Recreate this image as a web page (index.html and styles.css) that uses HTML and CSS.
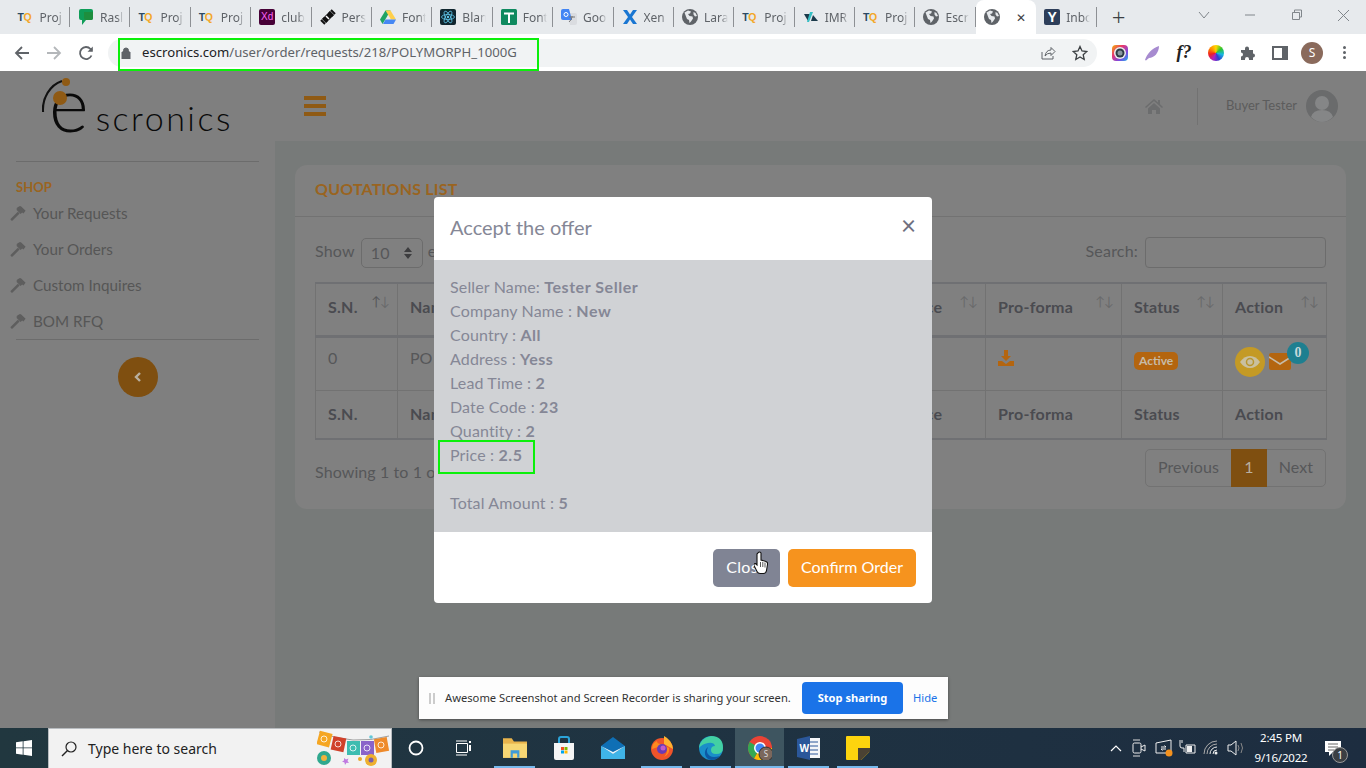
FILE: index.html
```html
<!DOCTYPE html>
<html lang="en">
<head>
    <meta charset="UTF-8">
    <title>Escronics - Quotations</title>
    <link rel="stylesheet" href="styles.css">
</head>
<body>

    <svg class="defs" width="0" height="0">
        <symbol id="globe" viewBox="0 0 16 16">
            <circle cx="8" cy="8" r="8" fill="#5f6368"/>
            <path d="M2.500 3.500 6 1.500l3 1-1 2-2 .5 1.500 2 3 .5.5 2-2 3-1.500 1.500-.5-3-2-1-1-2.500zM11.500 3l2 1 1.500 3-2 .5-1.500-2z" fill="#e7eaed"/>
        </symbol>
        <symbol id="hammer" viewBox="0 0 16 16">
            <path d="M.8 13.800 7.800 6.800l1.800 1.800-7 7q-.6.500-1.200 0l-.6-.6q-.5-.6 0-1.200zM6.200 3.200 9.400 1.200q1-.3 1.800.3L15.600 5.700l-2.200 2.700-1.200-.8-1.600 1.300-4.200-4.200.9-1z" fill="#5e5e5e"/>
        </symbol>
    </svg>

    <!-- Browser tabs -->
    <div class="tabstrip">
        <div class="tab"><span class="fav-tq">T<b>Q</b></span><span class="tab-title">Proj</span></div>
        <div class="tab"><svg class="fav" viewBox="0 0 16 16"><path d="M3 0h10q2 0 2 2v7q0 2-2 2H8l-4 5v-5H3q-2 0-2-2V2q0-2 2-2z" fill="#0f9d58"/><path d="M6 3h9v6q0 2-2 2H8q-2 0-2-2z" fill="#1e8e3e"/></svg><span class="tab-title">Rasl</span></div>
        <div class="tab"><span class="fav-tq">T<b>Q</b></span><span class="tab-title">Proj</span></div>
        <div class="tab"><span class="fav-tq">T<b>Q</b></span><span class="tab-title">Proj</span></div>
        <div class="tab"><span class="fav-xd">Xd</span><span class="tab-title">club</span></div>
        <div class="tab"><svg class="fav" viewBox="0 0 16 16"><path d="M2 10 10 2l4 4-8 8z" fill="#111"/><path d="M1 11l4 4M3 9l4 4M9 3l4 4M11 1l4 4" stroke="#111" stroke-width="2"/><path d="M6 7l3 3" stroke="#fff" stroke-width="1.500"/></svg><span class="tab-title">Pers</span></div>
        <div class="tab"><svg class="fav" viewBox="0 0 16 16"><path d="M5.500 1.500h5L5 11 2.500 15 0 10.500z" fill="#1fa463"/><path d="M5.500 1.500h5l5.500 9h-5z" fill="#ffd04b"/><path d="M3 15l2.500-4.500H16L13.500 15z" fill="#4688f4"/></svg><span class="tab-title">Font</span></div>
        <div class="tab"><svg class="fav" viewBox="0 0 16 16"><rect width="16" height="16" rx="2" fill="#10262f"/><g fill="none" stroke="#5fc6e8" stroke-width=".8"><ellipse cx="8" cy="8" rx="6.500" ry="2.500"/><ellipse cx="8" cy="8" rx="6.500" ry="2.500" transform="rotate(60 8 8)"/><ellipse cx="8" cy="8" rx="6.500" ry="2.500" transform="rotate(120 8 8)"/></g><circle cx="8" cy="8" r="1.200" fill="#5fc6e8"/></svg><span class="tab-title">Blan</span></div>
        <div class="tab"><svg class="fav" viewBox="0 0 16 16"><rect width="16" height="16" rx="1.500" fill="#0f8a5f"/><path d="M3 4.500h10M8 4.500V14" stroke="#fff" stroke-width="2"/></svg><span class="tab-title">Font</span></div>
        <div class="tab"><svg class="fav" viewBox="0 0 16 16"><path d="M7 4h7q2 0 2 2v8q0 2-2 2H9z" fill="#dadce0"/><path d="M2 0h6l3 11H2q-2 0-2-2V2q0-2 2-2z" fill="#4285f4"/><path d="M8 8h6M11 7v1q-.5 3-3 5" stroke="#777" fill="none"/><circle cx="5" cy="5.500" r="2" fill="none" stroke="#fff"/></svg><span class="tab-title">Goo</span></div>
        <div class="tab"><svg class="fav" viewBox="0 0 16 16"><path d="M1 1h4l3 4.500L11 1h4l-5 7 5 7h-4L8 10.500 5 15H1l5-7z" fill="#1976d2"/></svg><span class="tab-title">Xen</span></div>
        <div class="tab"><svg class="fav"><use href="#globe"/></svg><span class="tab-title">Lara</span></div>
        <div class="tab"><span class="fav-tq">T<b>Q</b></span><span class="tab-title">Proj</span></div>
        <div class="tab"><svg class="fav" viewBox="0 0 16 16"><path d="M1 5h6L5 12z" fill="#1b3a4b"/><path d="M7 3h3l-4 10H4z" fill="#35c0c5"/><path d="M10 6l5 6H8z" fill="#1b3a4b"/></svg><span class="tab-title">IMR</span></div>
        <div class="tab"><span class="fav-tq">T<b>Q</b></span><span class="tab-title">Proj</span></div>
        <div class="tab"><svg class="fav"><use href="#globe"/></svg><span class="tab-title">Escr</span></div>
        <div class="tab tab-active"><svg class="fav"><use href="#globe"/></svg><span class="tab-close">✕</span></div>
        <div class="tab"><span class="fav-y">Y</span><span class="tab-title">Inbo</span></div>
        <span class="tab-new">+</span>
        <div class="win-buttons">
            <svg width="12" height="8" viewBox="0 0 12 8"><path d="M1 1l5 6 5-6" fill="none" stroke="#80868b"/></svg>
            <svg width="12" height="2" viewBox="0 0 12 2"><path d="M1 1h10" stroke="#80868b"/></svg>
            <svg width="12" height="12" viewBox="0 0 12 12"><path d="M3.500 3V1h7v7h-2M1.500 3.500h7v7h-7z" fill="none" stroke="#80868b"/></svg>
            <svg width="13" height="13" viewBox="0 0 13 13"><path d="M1 1l11 11M12 1 1 12" stroke="#80868b"/></svg>
        </div>
    </div>

    <!-- Browser toolbar -->
    <div class="toolbar">
        <svg class="nav-icon" viewBox="0 0 16 16"><path d="M15 8H2M8 2 2 8l6 6" fill="none" stroke="#5f6368" stroke-width="1.800"/></svg>
        <svg class="nav-icon" viewBox="0 0 16 16"><path d="M1 8h13M8 2l6 6-6 6" fill="none" stroke="#b4b7ba" stroke-width="1.800"/></svg>
        <svg class="nav-icon" viewBox="0 0 16 16"><path d="M13.500 10.500A6 6 0 1 1 12.500 4L14 5.500" fill="none" stroke="#5f6368" stroke-width="1.800"/><path d="M14.800 1.500v5.300H9.500z" fill="#5f6368"/></svg>
        <div class="omnibox">
            <svg class="lock" viewBox="0 0 10 12"><path d="M2.500 5V3.500a2.500 2.500 0 0 1 5 0V5M1 5h8v7H1z" fill="#5f6368" stroke="#5f6368"/></svg>
            <span class="url"><b>escronics.com</b>/user/order/requests/218/POLYMORPH_1000G</span>
            <svg class="omni-icon" viewBox="0 0 16 16"><path d="M2 7v7h11v-3" fill="none" stroke="#5f6368"/><path d="M5 11q1-6 6-6V2.500l4 4-4 4V8q-4 0-6 3z" fill="none" stroke="#5f6368"/></svg>
            <svg class="omni-icon" viewBox="0 0 16 16"><path d="M8 1.500l2 4.500 4.800.5-3.600 3.200 1 4.800L8 12l-4.200 2.500 1-4.800L1.200 6.500 6 6z" fill="none" stroke="#3c4043" stroke-width="1.300"/></svg>
        </div>
        <div class="extensions">
            <svg class="ext" viewBox="0 0 16 16"><defs><linearGradient id="ring" x1="0" y1="0" x2="1" y2="1"><stop offset="0" stop-color="#f4b400"/><stop offset=".35" stop-color="#e8366f"/><stop offset=".7" stop-color="#7b4ae2"/><stop offset="1" stop-color="#1fb6e8"/></linearGradient></defs><rect width="16" height="16" rx="4" fill="url(#ring)"/><circle cx="8" cy="8" r="6" fill="#eee"/><circle cx="8" cy="8" r="4.500" fill="#2d3b45"/><circle cx="8" cy="8" r="2.500" fill="#8a97a0"/></svg>
            <svg class="ext" viewBox="0 0 16 16"><path d="M1 15C3 9 8 3 15 1c0 7-5 12-10 12l-3 2.500z" fill="#a78bd0"/></svg>
            <span class="ext-f">f?</span>
            <span class="ext ext-wheel"></span>
            <svg class="ext" viewBox="0 0 16 16"><path d="M1 5h4V3.500a2 2 0 0 1 4 0V5h4v3.500a2 2 0 0 1 0 4V15H9v-1a2 2 0 0 0-4 0v1H1v-3.500a2 2 0 0 0 0-4z" fill="#5f6368"/></svg>
            <svg class="ext" viewBox="0 0 16 16"><path d="M1 2h14v12H1z" fill="none" stroke="#5f6368" stroke-width="2"/><path d="M10 2h5v12h-5z" fill="#5f6368"/></svg>
            <span class="profile">S</span>
            <span class="kebab"><i></i><i></i><i></i></span>
        </div>
    </div>

    <div class="page">

        <!-- Sidebar -->
        <aside class="sidebar">
            <div class="brand">
                <svg class="brand-mark" viewBox="0 0 40 40" width="40" height="40"><path d="M1 34C0 20 8 7 20 3" fill="none" stroke="#111" stroke-width="2.200"/><circle cx="24" cy="4" r="4" fill="#8f5a14"/><circle cx="18" cy="20" r="7" fill="#8f5a14"/></svg>
                <span class="brand-e">e</span><span class="brand-name">scronics</span>
            </div>
            <hr class="side-rule">
            <div class="side-heading">SHOP</div>
            <ul class="side-menu">
                <li><svg class="side-icon"><use href="#hammer"/></svg>Your Requests</li>
                <li><svg class="side-icon"><use href="#hammer"/></svg>Your Orders</li>
                <li><svg class="side-icon"><use href="#hammer"/></svg>Custom Inquires</li>
                <li><svg class="side-icon"><use href="#hammer"/></svg>BOM RFQ</li>
            </ul>
            <hr class="side-rule">
            <button class="side-toggle"><svg width="8" height="10" viewBox="0 0 8 10"><path d="M6 1 2 5l4 4" fill="none" stroke="#b9b0a0" stroke-width="2.400"/></svg></button>
        </aside>

        <div class="main">
            <!-- Top bar -->
            <header class="topbar">
                <div class="hamburger"><i></i><i></i><i></i></div>
                <div class="topbar-right">
                    <svg class="home" viewBox="0 0 18 15"><path d="M9 0 0 8l1 1 8-7 8 7 1-1-3-2.700V1h-2v2.500zM3 9.500V15h4v-4h4v4h4V9.500L9 4z" fill="#6c6d6e"/></svg>
                    <span class="topbar-rule"></span>
                    <span class="user-name">Buyer Tester</span>
                    <svg class="avatar" viewBox="0 0 32 32"><circle cx="16" cy="16" r="16" fill="#6a6b6c"/><circle cx="16" cy="13" r="7" fill="#858687"/><path d="M5 27q2-7 11-7t11 7q-5 5-11 5T5 27z" fill="#858687"/></svg>
                </div>
            </header>

            <div class="content">
                <section class="card">
                    <h6 class="card-title">QUOTATIONS LIST</h6>
                    <div class="card-body">
                        <div class="table-controls">
                            <label class="length">Show <span class="select-box">10<svg width="8" height="12" viewBox="0 0 8 12"><path d="M4 0l4 5H0zM4 12 0 7h8z" fill="#3d3d3f"/></svg></span> entries</label>
                            <label class="search">Search: <span class="search-box"></span></label>
                        </div>
                        <table class="data-table">
                            <colgroup>
                                <col class="col-sn"><col class="col-name"><col class="col-price"><col class="col-proforma"><col class="col-status"><col class="col-action">
                            </colgroup>
                            <thead>
                                <tr>
                                    <th>S.N.<span class="sort"><b>↑</b>↓</span></th>
                                    <th>Name<span class="sort">↑↓</span></th>
                                    <th>Price<span class="sort">↑↓</span></th>
                                    <th>Pro-forma<span class="sort">↑↓</span></th>
                                    <th>Status<span class="sort">↑↓</span></th>
                                    <th>Action<span class="sort">↑↓</span></th>
                                </tr>
                            </thead>
                            <tbody>
                                <tr>
                                    <td>0</td>
                                    <td>PO</td>
                                    <td></td>
                                    <td><svg class="download" viewBox="0 0 16 16"><path d="M6 0h4v6h3l-5 5-5-5h3zM0 11h4l4 3 4-3h4v5H0z" fill="#b4650f"/></svg></td>
                                    <td><span class="badge-active">Active</span></td>
                                    <td>
                                        <div class="actions">
                                            <span class="eye-btn"><svg width="20" height="14" viewBox="0 0 20 14"><path d="M0 7q4-6 10-6t10 6q-4 6-10 6T0 7z" fill="#c9c0a0"/><circle cx="10" cy="7" r="3.500" fill="none" stroke="#b8962f" stroke-width="1.500"/></svg></span>
                                            <svg class="mail" viewBox="0 0 22 17"><rect width="22" height="17" rx="2" fill="#b4650f"/><path d="M0 4l11 7 11-7" fill="none" stroke="#c6bba8" stroke-width="1.500"/></svg>
                                            <span class="mail-count">0</span>
                                        </div>
                                    </td>
                                </tr>
                            </tbody>
                            <tfoot>
                                <tr>
                                    <th>S.N.</th><th>Name</th><th>Price</th><th>Pro-forma</th><th>Status</th><th>Action</th>
                                </tr>
                            </tfoot>
                        </table>
                        <div class="table-footer">
                            <span>Showing 1 to 1 of 1 entries</span>
                            <div class="pagination">
                                <span class="page-link page-prev">Previous</span>
                                <span class="page-link page-current">1</span>
                                <span class="page-link page-next">Next</span>
                            </div>
                        </div>
                    </div>
                </section>
            </div>
        </div>

        <!-- Modal -->
        <div class="modal">
            <div class="modal-header">
                <h5>Accept the offer</h5>
                <span class="modal-close">×</span>
            </div>
            <div class="modal-body">
                <div>Seller Name: <b>Tester Seller</b></div>
                <div>Company Name : <b>New</b></div>
                <div>Country : <b>All</b></div>
                <div>Address : <b>Yess</b></div>
                <div>Lead Time : <b>2</b></div>
                <div>Date Code : <b>23</b></div>
                <div>Quantity : <b>2</b></div>
                <div>Price : <b>2.5</b></div>
                <br>
                <div>Total Amount : <b>5</b></div>
            </div>
            <div class="modal-footer">
                <button class="btn btn-close">Close</button>
                <button class="btn btn-confirm">Confirm Order</button>
            </div>
            <span class="mark-price"></span>
            <svg class="hand" viewBox="0 0 14 24" width="14" height="24"><path d="M4 2q1.500-2 3 0v7l5 1.500q2 .7 1.500 3l-1 6q-.5 3-3 3H6q-2 0-3-2l-3-6q-.5-2 1.500-2L3 14V3z" fill="#fff" stroke="#111" stroke-width="1.100"/><path d="M6.500 11v5M8.800 11v5M11 11.500v5" stroke="#111" stroke-width=".7"/></svg>
        </div>

        <!-- Screen sharing notice -->
        <div class="share-bar">
            <span class="grip"></span>
            <span class="share-text">Awesome Screenshot and Screen Recorder is sharing your screen.</span>
            <button class="share-stop">Stop sharing</button>
            <span class="share-hide">Hide</span>
        </div>
    </div>

    <span class="mark-url"></span>

    <!-- Windows taskbar -->
    <footer class="taskbar">
        <svg class="start" viewBox="0 0 16 16"><path d="M0 2.300 6.700 1.300v6.200H0zM7.500 1.200 16 0v7.500H7.500zM0 8.300h6.700v6.400L0 13.700zM7.500 8.300H16V16l-8.500-1.200z" fill="#fff"/></svg>
        <div class="task-search">
            <svg class="task-glass" viewBox="0 0 16 16"><circle cx="10" cy="6" r="5" fill="none" stroke="#222" stroke-width="1.200"/><path d="M6.500 9.500 1 15" stroke="#222" stroke-width="1.400"/></svg>
            <span>Type here to search</span>
            <svg class="doodle" viewBox="0 0 74 38" width="74" height="38">
                <path d="M2 2Q35 16 72 6" fill="none" stroke="#666" stroke-width=".6"/>
                <rect x="1" y="2" width="13" height="14" fill="#f5a623" transform="rotate(15 7 9)"/>
                <rect x="15" y="7" width="13" height="14" fill="#d0412a" transform="rotate(12 21 14)"/>
                <rect x="30" y="11" width="13" height="14" fill="#3dbcb0"/>
                <rect x="44" y="11" width="13" height="14" fill="#8a63c9"/>
                <rect x="58" y="8" width="13" height="14" fill="#ee8a2a" transform="rotate(-10 64 15)"/>
                <g fill="none" stroke="#fff" stroke-width=".8"><circle cx="7" cy="9" r="3"/><circle cx="21" cy="14" r="3"/><circle cx="36" cy="18" r="3"/><circle cx="50" cy="18" r="3"/><circle cx="64" cy="15" r="3"/></g>
                <circle cx="7" cy="28" r="7" fill="#2fa88e"/><circle cx="7" cy="28" r="3" fill="#f0b23c"/>
                <path d="M27 28l2 1.500 2.500-1-1 2.500 1.500 2-2.500-.3L28 35l-.5-2.500-2.500-1 2-1z" fill="#c07ae0"/>
                <circle cx="43" cy="29" r="2" fill="#e9a92d"/>
                <circle cx="54" cy="30" r="6" fill="#eeb02f"/><circle cx="54" cy="30" r="2.500" fill="#7a5ea8"/>
                <circle cx="54" cy="7" r="1.800" fill="#62c8d8"/>
            </svg>
        </div>
        <div class="task-apps">
            <span class="app"><svg class="cortana" viewBox="0 0 16 16"><circle cx="8" cy="8" r="6.500" fill="none" stroke="#fff" stroke-width="1.800"/></svg></span>
            <span class="app"><svg class="app-sm" viewBox="0 0 16 16"><path d="M.5 3.500h11v9H.5zM0 1h11M0 15h11" fill="none" stroke="#fff"/><path d="M13 1h2v2h-2zM13 5h2v6h-2z" fill="#fff"/></svg></span>
            <span class="app app-open"><svg viewBox="0 0 22 20"><path d="M0 1h8l2 3h12v15H0z" fill="#e9b44c"/><path d="M0 6h22v13H0z" fill="#f7d774"/><path d="M7 12h8v7h-2v-4H9v4H7z" fill="#3f9bd8"/></svg></span>
            <span class="app"><svg viewBox="0 0 22 24"><path d="M1 7h20v15q0 2-2 2H3q-2 0-2-2z" fill="#f5f5f5"/><path d="M6 7V3q0-2 2-2h6q2 0 2 2v4" fill="none" stroke="#2ba4d9" stroke-width="2"/><path d="M8 11h3v3H8z" fill="#f25022"/><path d="M11.500 11h3v3h-3z" fill="#7fba00"/><path d="M8 14.500h3v3H8z" fill="#00a4ef"/><path d="M11.500 14.500h3v3h-3z" fill="#ffb900"/></svg></span>
            <span class="app"><svg viewBox="0 0 24 22"><path d="M12 0 24 9v13H0V9z" fill="#0f6fb5"/><path d="M0 9l12 8 12-8v13H0z" fill="#3fb4e8"/><path d="M0 9l12 6 12-6-12 8z" fill="#e8f5fb"/></svg></span>
            <span class="app app-open"><svg viewBox="0 0 24 24"><circle cx="12" cy="13" r="11" fill="#f0542a"/><path d="M14 0q8 4 9 13L14 8z" fill="#ffb22e"/><path d="M2 13q0-6 5-8 0 3 4 3l8 4q1 6-5 9 7-8-3-11z" fill="#ff8a1e"/><circle cx="12" cy="13" r="5" fill="#6a3bb5"/><circle cx="13" cy="12" r="2.500" fill="#c35bc9"/></svg></span>
            <span class="app app-open"><svg viewBox="0 0 24 24"><circle cx="12" cy="12" r="12" fill="#1a8fc9"/><path d="M0 12Q1 2 12 0q12 0 12 12 0 6-7 6-5 0-5-4 0-4 4-4-1-4-7-3-6 1-9 5z" fill="#43d0a3"/><path d="M12 24C5 23 4 14 9 11q-3 6 2 9 3 2 10 0-3 4-9 4z" fill="#0c59a4"/></svg></span>
            <span class="app app-open app-active"><svg class="chrome" viewBox="0 0 24 24"><circle cx="12" cy="12" r="12" fill="#ea4335"/><path d="M12 12 24 12A12 12 0 0 1 6 22.400z" fill="#fbbc05"/><path d="M12 12 6 22.400A12 12 0 0 1 1.600 6z" fill="#34a853"/><circle cx="12" cy="12" r="6" fill="#fff"/><circle cx="12" cy="12" r="4.500" fill="#4285f4"/><circle cx="18" cy="18" r="7" fill="#7b675c" stroke="#333"/><text x="18" y="21" class="chrome-s">S</text></svg></span>
            <span class="app app-open"><svg viewBox="0 0 24 24"><path d="M9 2h14v20H9z" fill="#f3f5f8"/><path d="M13 6h8M13 10h8M13 14h8M13 18h8" stroke="#2b579a"/><path d="M0 3l13-3v24L0 21z" fill="#2b579a"/><text x="2.500" y="16" class="word-w">W</text></svg></span>
            <span class="app app-open"><svg viewBox="0 0 22 22"><path d="M1 0h20q1 0 1 1v13l-8 8H1q-1 0-1-1V1q0-1 1-1z" fill="#fdd40e"/><path d="M22 11v3l-8 8h-3v-11z" fill="#4a4233"/></svg></span>
        </div>
        <div class="tray">
            <svg class="tray-caret" viewBox="0 0 12 7"><path d="M1 6l5-5 5 5" fill="none" stroke="#fff" stroke-width="1.200"/></svg>
            <svg class="tray-icon" viewBox="0 0 18 18"><path d="M2 1h7M2 17h7" stroke="#ddd" fill="none"/><rect x="2" y="4" width="8" height="10" rx="1.500" fill="none" stroke="#eee"/><path d="M10 8l4-2v6l-4-2" fill="none" stroke="#eee"/></svg>
            <svg class="tray-icon" viewBox="0 0 18 18"><path d="M1 4l15-3v13H1z" fill="none" stroke="#eee"/><path d="M6 8h5l-1.500-1.500M11 10H6l1.500 1.500" fill="none" stroke="#eee"/><circle cx="14" cy="14" r="3.500" fill="#f5921e"/></svg>
            <svg class="tray-icon" viewBox="0 0 18 18"><path d="M7 6h9v8H7z" fill="none" stroke="#eee"/><path d="M8 7h5v6H8z" fill="#eee"/><path d="M1 4v3q0 2 2 2h2M3 1v3M1 1v3M5 9v4" fill="none" stroke="#eee"/></svg>
            <svg class="tray-icon" viewBox="0 0 18 18"><path d="M1 15A13 13 0 0 1 14 2M4 15A10 10 0 0 1 14 5" fill="none" stroke="#aaa"/><path d="M7 15a7 7 0 0 1 7-7M10 15a4 4 0 0 1 4-4" fill="none" stroke="#eee"/><circle cx="13" cy="14" r="1.500" fill="#eee"/></svg>
            <svg class="tray-icon" viewBox="0 0 18 18"><path d="M1 6h3l5-4v14l-5-4H1z" fill="none" stroke="#eee"/><path d="M11 6q2 3 0 6M14 4q3 5 0 10" fill="none" stroke="#888"/></svg>
            <div class="clock"><div>2:45 PM</div><div>9/16/2022</div></div>
            <span class="notify"><svg width="16" height="15" viewBox="0 0 16 15"><path d="M0 0h16v11H8l-4 4v-4H0z" fill="#fff"/><path d="M3 3h10M3 6h10M3 9h6" stroke="#666"/></svg><span class="notify-count">1</span></span>
        </div>
    </footer>

</body>
</html>
```

FILE: styles.css
```css
* {
    box-sizing: border-box;
}
html, body {
    margin: 0;
    padding: 0;
    width: 1366px;
    height: 768px;
    overflow: hidden;
}
body {
    position: relative;
    display: flex;
    flex-direction: column;
    font-family: 'Lato', 'Noto Sans', sans-serif;
    font-size: 16px;
    color: #565759;
    background-color: #7f7f7f;
}
.defs {
    position: absolute;
}

/* Browser tabs */
.tabstrip {
    display: flex;
    align-items: center;
    flex: 0 0 34px;
    padding-left: 9.6px;
    background-color: #e7eaed;
    font-family: 'Noto Sans', sans-serif;
    font-size: 12px;
    color: #5f6368;
}
.tab {
    position: relative;
    display: flex;
    align-items: center;
    flex: 0 0 60.4px;
    height: 34px;
    padding-left: 8px;
}
.tab::after {
    content: '';
    position: absolute;
    right: 0;
    top: 7px;
    width: 1px;
    height: 20px;
    background-color: #8d9094;
}
.tab-active {
    background-color: #fff;
    border-radius: 8px 8px 0 0;
}
.tab-active::after {
    display: none;
}
.tab-title {
    width: 24px;
    margin-left: 6px;
    overflow: hidden;
    white-space: nowrap;
    -webkit-mask-image: linear-gradient(to right, #000 70%, transparent);
    mask-image: linear-gradient(to right, #000 70%, transparent);
}
.fav {
    flex: 0 0 16px;
    width: 16px;
    height: 16px;
}
.fav-tq {
    flex: 0 0 16px;
    font-family: 'Liberation Sans', sans-serif;
    font-size: 10.5px;
    font-weight: bold;
    letter-spacing: -.5px;
    color: #2c4a63;
}
.fav-tq b {
    color: #f3a728;
}
.fav-xd {
    flex: 0 0 16px;
    height: 16px;
    border-radius: 2px;
    background-color: #470137;
    color: #ff61f6;
    font-family: 'Liberation Sans', sans-serif;
    font-size: 10px;
    line-height: 16px;
    text-align: center;
}
.fav-y {
    flex: 0 0 16px;
    height: 16px;
    border-radius: 2px;
    background-color: #2d3e5a;
    color: #fff;
    font-family: 'Liberation Sans', sans-serif;
    font-size: 14px;
    font-weight: bold;
    line-height: 16px;
    text-align: center;
}
.tab-close {
    margin-left: 16px;
    font-size: 12px;
    color: #3c4043;
}
.tab-new {
    margin-left: 15px;
    font-size: 24px;
    font-weight: 300;
    line-height: 1;
    color: #3c4043;
}
.win-buttons {
    display: flex;
    align-items: center;
    justify-content: space-between;
    width: 152px;
    height: 14px;
    margin: -4px 16px 0 auto;
}

/* Browser toolbar */
.toolbar {
    display: flex;
    align-items: center;
    flex: 0 0 37px;
    padding-left: 14px;
    background-color: #fff;
    font-family: 'Noto Sans', sans-serif;
}
.nav-icon {
    width: 16px;
    height: 16px;
    margin-right: 16px;
}
.omnibox {
    display: flex;
    align-items: center;
    width: 989px;
    height: 28px;
    margin-left: -2px;
    padding: 0 9px 0 12px;
    background-color: #f1f3f4;
    border-radius: 14px;
}
.lock {
    width: 10px;
    height: 12px;
    margin-left: 1px;
    margin-right: 12px;
}
.url {
    flex: 1;
    margin: -2px 0 0 -1px;
    font-size: 13.150px;
    color: #5f6368;
    white-space: nowrap;
}
.url b {
    font-weight: normal;
    color: #202124;
}
.omni-icon {
    width: 16px;
    height: 16px;
    margin-left: 16px;
}
.extensions {
    display: flex;
    align-items: center;
    margin-left: 15px;
}
.ext {
    width: 16px;
    height: 16px;
    margin-right: 16px;
}
.ext-wheel {
    border-radius: 50%;
    background: conic-gradient(#ffd800, #2fc42f, #18b8e0, #2b3fd0, #b020c0, #f02020, #ff8a00, #ffd800);
}
.ext-f {
    width: 16px;
    margin-right: 16px;
    font-family: 'Liberation Serif', serif;
    font-size: 18px;
    font-style: italic;
    font-weight: bold;
    text-align: center;
    color: #222;
}
.profile {
    width: 22px;
    height: 22px;
    margin-left: -3px;
    border-radius: 50%;
    background-color: #8a6a5c;
    color: #fff;
    font-size: 12px;
    line-height: 22px;
    text-align: center;
}
.kebab {
    display: flex;
    flex-direction: column;
    gap: 2px;
    margin-left: 20px;
}
.kebab i {
    width: 3px;
    height: 3px;
    border-radius: 50%;
    background-color: #5f6368;
}

/* Page behind the dialog */
.page {
    position: relative;
    display: flex;
    flex: 1;
    min-height: 0;
    background-color: #7f7f7f;
}
.sidebar {
    flex: 0 0 275px;
    padding: 0 16px;
}
.brand {
    position: relative;
    height: 90px;
    padding-left: 33px;
    white-space: nowrap;
    color: #0a0a0a;
    font-weight: 300;
    line-height: 64px;
}
.brand-mark {
    position: absolute;
    left: 26px;
    top: 7px;
}
.brand-e {
    font-size: 76px;
}
.brand-name {
    margin-left: 7px;
    font-size: 34px;
    letter-spacing: 2.500px;
    vertical-align: 1px;
}
.side-rule {
    height: 1px;
    margin: 0;
    border: 0;
    background-color: #6c6c6c;
}
.side-heading {
    margin-top: 17px;
    font-size: 13px;
    font-weight: bold;
    color: #9a6420;
}
.side-menu {
    list-style-type: none;
    margin: 0 0 0 -6px;
    padding: 0;
}
.side-menu li {
    display: flex;
    align-items: center;
    height: 36px;
    font-size: 15.200px;
    color: #565656;
}
.side-icon {
    width: 16px;
    height: 16px;
    margin-right: 7px;
}
.side-toggle {
    display: block;
    width: 40px;
    height: 40px;
    margin: 17px auto 0;
    padding: 0;
    border: 0;
    border-radius: 50%;
    background-color: #7f4f10;
}
.main {
    display: flex;
    flex-direction: column;
    flex: 1;
    min-width: 0;
}
.topbar {
    display: flex;
    align-items: center;
    flex: 0 0 70px;
    padding: 0 28px 0 29px;
}
.hamburger {
    display: flex;
    flex-direction: column;
    gap: 4px;
}
.hamburger i {
    width: 22px;
    height: 4px;
    background-color: #8f5a14;
}
.topbar-right {
    display: flex;
    align-items: center;
    margin-left: auto;
}
.home {
    width: 18px;
    height: 15px;
}
.topbar-rule {
    width: 1px;
    height: 37px;
    margin: 0 28px 0 34px;
    background-color: #727272;
}
.user-name {
    margin: -3px 9px 0 0;
    font-size: 13px;
    color: #5c5c5c;
}
.avatar {
    width: 32px;
    height: 32px;
}
.content {
    flex: 1;
    padding: 24px 20px;
    background-color: #777a79;
}
.card {
    background-color: #808080;
    border-radius: 12px;
}
.card-title {
    height: 52px;
    margin: 0;
    padding: 14px 20px 0;
    border-bottom: 1px solid #727272;
    font-size: 16px;
    font-weight: bold;
    letter-spacing: .2px;
    color: #9a6420;
}
.card-body {
    padding: 20px 20px 22px;
}
.table-controls {
    display: flex;
    justify-content: space-between;
    height: 31px;
    margin-bottom: 14px;
    letter-spacing: .2px;
}
.length, .search {
    display: flex;
    align-items: flex-start;
    line-height: 28px;
}
.select-box {
    display: flex;
    justify-content: space-between;
    align-items: center;
    width: 62px;
    height: 30px;
    margin: 1px 5px 0 6px;
    padding: 0 10px 0 9px;
    border: 1px solid #6c6c6c;
    border-radius: 5px;
}
.search-box {
    width: 181px;
    height: 31px;
    margin-left: 7px;
    border: 1px solid #6c6c6c;
    border-radius: 4px;
}

/* Table */
.data-table {
    width: 1011px;
    table-layout: fixed;
    border-collapse: collapse;
    border: 2px solid #6f7073;
    border-left-width: 1px;
    border-right-width: 1px;
}
.col-sn { width: 82px; }
.col-name { width: 495px; }
.col-price { width: 93px; }
.col-proforma { width: 136px; }
.col-status { width: 101px; }
.col-action { width: 104px; }
.data-table th, .data-table td {
    padding: 0 12px;
    border: 1px solid #727272;
    text-align: left;
    white-space: nowrap;
}
.data-table th {
    letter-spacing: .25px;
    color: #4a4b50;
}
.data-table thead th {
    position: relative;
    height: 53px;
    padding-bottom: 5px;
    border-bottom: 3px solid #6f7073;
}
.data-table tbody td {
    height: 54px;
    padding-bottom: 12px;
}
.data-table tfoot th {
    height: 49px;
    padding-bottom: 2px;
}
.sort {
    position: absolute;
    right: 8px;
    top: 9px;
    font-size: 13px;
    font-weight: normal;
    letter-spacing: -1px;
    color: #696a6b;
}
.sort b {
    font-weight: normal;
    color: #565759;
}
.download {
    display: block;
    width: 16px;
    height: 16px;
}
.badge-active {
    display: inline-block;
    height: 18px;
    margin-top: 6px;
    padding: 0 5px;
    border-radius: 5px;
    background-color: #b4650f;
    color: #c6bba8;
    font-size: 12px;
    font-weight: bold;
    line-height: 18px;
}
.actions {
    position: relative;
    display: flex;
    align-items: center;
    margin-top: 8px;
}
.eye-btn {
    display: flex;
    align-items: center;
    justify-content: center;
    width: 30px;
    height: 30px;
    border-radius: 50%;
    background-color: #c49a25;
}
.mail {
    width: 22px;
    height: 17px;
    margin-left: 4px;
}
.mail-count {
    position: absolute;
    left: 52px;
    top: -5px;
    width: 22px;
    height: 22px;
    border-radius: 50%;
    background-color: #1e7f90;
    color: #c5d8da;
    font-family: 'Liberation Serif', serif;
    font-size: 14px;
    font-weight: bold;
    line-height: 22px;
    text-align: center;
}
.table-footer {
    display: flex;
    justify-content: space-between;
    margin-top: 9px;
    letter-spacing: .1px;
}
.table-footer > span {
    margin-top: 13px;
}
.pagination {
    display: flex;
    height: 38px;
    border: 1px solid #727272;
    border-radius: 5px;
}
.page-link {
    line-height: 33px;
    text-align: center;
}
.page-prev {
    width: 85px;
}
.page-next {
    width: 58px;
}
.page-current {
    width: 36px;
    margin: -1px 0;
    line-height: 35px;
    background-color: #7f4f10;
    color: #b9b0a0;
}

/* Dialog */
.modal {
    position: absolute;
    left: 434px;
    top: 126px;
    width: 498px;
    height: 406px;
    background-color: #fff;
    border-radius: 4px;
    overflow: hidden;
    color: #858796;
}
.modal-header {
    display: flex;
    justify-content: space-between;
    align-items: center;
    height: 63px;
    padding: 0 16px;
}
.modal-header h5 {
    margin: 0 0 4px;
    font-size: 20px;
    font-weight: normal;
    line-height: 54px;
}
.modal-close {
    margin: -8px 0 0 0;
    font-size: 26px;
    color: #6f7080;
}
.modal-body {
    height: 272px;
    padding: 15px 16px;
    background-color: #d0d2d5;
    line-height: 24px;
    letter-spacing: .15px;
}
.modal-body b {
    letter-spacing: .55px;
}
.modal-footer {
    display: flex;
    justify-content: flex-end;
    gap: 8px;
    padding: 17px 16px;
}
.btn {
    height: 38px;
    padding: 0 0 3px;
    border: 0;
    border-radius: 5px;
    color: #fff;
    font-family: inherit;
    font-size: 16px;
}
.btn-close {
    width: 67px;
    background-color: #808494;
    letter-spacing: .3px;
}
.btn-confirm {
    width: 128px;
    background-color: #f6931e;
}
.mark-price {
    position: absolute;
    left: 4px;
    top: 243px;
    width: 97px;
    height: 34px;
    border: 2px solid #0bf00b;
}
.mark-url {
    position: absolute;
    left: 118px;
    top: 38px;
    width: 421px;
    height: 33px;
    border: 2px solid #0bf00b;
}
.hand {
    position: absolute;
    left: 320px;
    top: 354px;
}

/* Screen share notice */
.share-bar {
    position: absolute;
    left: 419px;
    top: 606px;
    display: flex;
    align-items: center;
    width: 529px;
    height: 42px;
    background-color: #fdfdfd;
    box-shadow: 0 1px 3px rgba(0, 0, 0, .4);
    font-family: 'Noto Sans', sans-serif;
    font-size: 11.200px;
    color: #333;
}
.grip {
    width: 6px;
    height: 11px;
    margin: 0 10px 0 10px;
    border-left: 2px solid #ccc;
    border-right: 2px solid #ccc;
}
.share-text {
    width: 357px;
    margin-top: -2px;
    white-space: nowrap;
}
.share-stop {
    width: 101px;
    height: 32px;
    padding: 0 0 2px;
    border: 0;
    border-radius: 4px;
    background-color: #1a73e8;
    color: #fff;
    font-family: inherit;
    font-size: 11.100px;
    font-weight: bold;
}
.share-hide {
    margin: -2px 0 0 10px;
    color: #1a73e8;
}

/* Windows taskbar */
.taskbar {
    display: flex;
    align-items: center;
    flex: 0 0 40px;
    height: 40px;
    background: linear-gradient(to right, #21373f, #1f3342 50%, #1d2d40);
    font-family: 'Noto Sans', sans-serif;
}
.start {
    width: 16px;
    height: 16px;
    margin: 0 16px;
}
.task-search {
    display: flex;
    align-items: center;
    width: 344px;
    height: 40px;
    padding-left: 12px;
    background-color: #f2f2f2;
    border: 1px solid #b8bcc0;
    border-bottom: 0;
    font-size: 14px;
    color: #222;
}
.task-glass {
    width: 16px;
    height: 16px;
    margin-right: 11px;
}
.doodle {
    margin-left: auto;
}
.task-apps {
    display: flex;
}
.app {
    position: relative;
    display: flex;
    align-items: center;
    justify-content: center;
    width: 49px;
    height: 40px;
}
.app svg {
    width: 24px;
    height: 24px;
}
.app .cortana {
    width: 16px;
    height: 16px;
    margin-left: -2px;
}
.app .app-sm {
    width: 16px;
    height: 16px;
    margin-left: -3px;
}
.app-open::after {
    content: '';
    position: absolute;
    left: 4px;
    right: 4px;
    bottom: 0;
    height: 2px;
    background-color: #76b9ed;
}
.app-active {
    background-color: #3e5560;
}
.app-active::after {
    left: 0;
    right: 0;
}
.chrome-s {
    font-size: 8px;
    fill: #ddd;
    text-anchor: middle;
}
.word-w {
    font-size: 10px;
    font-weight: bold;
    fill: #fff;
}
.tray {
    display: flex;
    align-items: center;
    height: 40px;
    margin-left: auto;
    color: #fff;
}
.tray-caret {
    width: 12px;
    height: 7px;
    margin-right: 9px;
}
.tray-icon {
    width: 18px;
    height: 18px;
    margin-right: 6px;
}
.clock {
    width: 74px;
    margin-left: -7px;
    font-size: 11.500px;
    letter-spacing: -.2px;
    line-height: 20px;
    text-align: center;
}
.notify {
    position: relative;
    display: flex;
    margin: 0 25px 0 7px;
}
.notify-count {
    position: absolute;
    left: 7px;
    top: 6px;
    width: 16px;
    height: 16px;
    border-radius: 50%;
    background-color: #3b3f43;
    border: 1px solid #999;
    font-size: 10px;
    line-height: 14px;
    text-align: center;
}
```
